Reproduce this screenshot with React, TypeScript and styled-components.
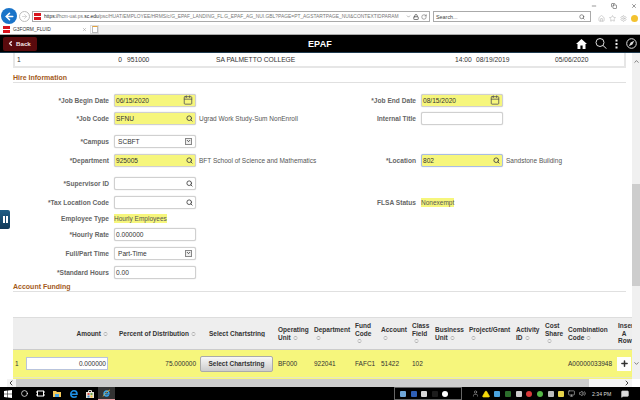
import React from "react";
import styled, { createGlobalStyle } from "styled-components";
import { Search, Star, Settings, RotateCw, Lock, X, Minus, Copy, ChevronLeft, ChevronRight, ChevronUp, ChevronDown, ArrowLeft, ArrowRight, Plus, Calendar, Circle, MessageSquare, Volume2, Monitor, Home, AlertTriangle, User } from "lucide-react";

const Global = createGlobalStyle`
  html, body { margin: 0; padding: 0; width: 640px; height: 400px; overflow: hidden; background: #fff; }
  * { box-sizing: border-box; }
  body { font-family: "Liberation Sans", Arial, sans-serif; color: #333; }
`;

const Page = styled.div`
  width: 640px; height: 400px; display: flex; flex-direction: column; position: relative; overflow: hidden;
`;

// --- browser chrome ---
const AddressRow = styled.div`
  height: 25px; flex: none; padding: 0 3px 1px 1px; display: flex; align-items: flex-end; background: #fff; position: relative;
`;
const BackCircle = styled.div`
  width: 16px; height: 16px; border-radius: 50%; background: #1a74c9; color: #fff; display: flex; align-items: center; justify-content: center; flex: none;
`;
const ForwardCircle = styled.div`
  width: 11px; height: 11px; border-radius: 50%; border: 1px solid #bbb; color: #bbb; display: flex; align-items: center; justify-content: center; flex: none; margin: 0 2px 2px 2px;
`;
const UrlBox = styled.div`
  width: 398px; height: 11px; border: 1px solid #aaa; display: flex; align-items: center; margin-bottom: 2px; padding: 0 2px 0 1px; flex: none; background: #fff;
`;
const Favicon = styled.span`
  width: 7px; height: 7px; background: #d9141e; flex: none; display: flex; align-items: center;
  &::after { content: ""; display: block; width: 100%; height: 1px; background: #fff; }
`;
const UrlText = styled.div`
  flex: 1; min-width: 0; margin-left: 3px; font-size: 4.9px; line-height: 9px; white-space: nowrap; overflow: hidden; color: #777;
  b { color: #222; font-weight: 400; }
`;
const UrlTools = styled.div`
  display: flex; align-items: center; gap: 2px; color: #555; flex: none; margin-left: 2px;
`;
const SearchBox = styled.div`
  width: 158px; height: 11px; border: 1px solid #aaa; margin: 0 0 2px 3px; display: flex; align-items: center; justify-content: space-between; padding: 0 5px 0 2px; font-size: 5.4px; color: #444; flex: none;
`;
const ChromeTools = styled.div`
  display: flex; gap: 4px; color: #b5b5b5; margin: 0 0 2px 7px; align-items: center;
`;
const Smiley = styled.span`
  width: 7px; height: 7px; border-radius: 50%; background: #f3c22f; display: block;
`;
const WindowControls = styled.div`
  position: absolute; top: 3px; right: 3px; display: flex; gap: 14px; color: #333;
`;
const TabRow = styled.div`
  height: 10px; flex: none; display: flex; background: #f2f2f2; border-bottom: 1px solid #aaa;
`;
const Tab = styled.div`
  width: 90px; background: #fff; display: flex; align-items: center; padding: 0 3px; font-size: 4.9px; color: #333; gap: 3px;
  span:nth-child(2) { flex: 1; }
`;
const NewTab = styled.div`
  width: 9px; background: #fff; border: 1px solid #ddd; display: flex; align-items: center; justify-content: center;
  &::after { content: ""; width: 4px; height: 5px; border: 1px solid #bbb; border-top-color: #e8a33a; }
`;

// --- app header ---
const Banner = styled.header`
  height: 18px; flex: none; background: #000; border-bottom: 1px solid #1e3a4f; display: grid; grid-template-columns: 1fr auto 1fr; align-items: center; padding: 0 3px; color: #fff;
`;
const BackButton = styled.button`
  width: 34px; height: 14px; border: none; border-radius: 2px; background: #5a0a0d; color: #f0e2e2; font: bold 6.2px "Liberation Sans", Arial, sans-serif; display: flex; align-items: center; padding: 0 0 0 4px; gap: 2px;
`;
const BannerTitle = styled.div`
  font-size: 9px; font-weight: bold; letter-spacing: 0.2px;
`;
const BannerIcons = styled.div`
  display: flex; justify-content: flex-end; align-items: center; gap: 8px;
`;

// --- main ---
const Body = styled.div`
  flex: 1; min-height: 0; display: flex; position: relative;
`;
const Content = styled.main`
  flex: 1; min-width: 0; overflow: hidden; padding-left: 13px; font-size: 6.6px; line-height: 9px;
`;
const VScroll = styled.div`
  width: 8px; flex: none; background: #f0f0f0; display: flex; flex-direction: column; align-items: center; color: #555; padding-top: 5px;
`;
const VThumb = styled.div`
  width: 8px; height: 102px; background: #cdcdcd; margin-top: 119px; margin-bottom: 74px;
`;
const SideTab = styled.div`
  position: absolute; left: 0; top: 157px; width: 10px; height: 19px; background: linear-gradient(#1f5e86, #123a58); border-radius: 0 2px 2px 0; display: flex; align-items: center; justify-content: center; gap: 1px;
  i { display: block; width: 2px; height: 7px; background: #fff; }
`;

const SummaryBox = styled.div`
  width: 613px; height: 15px; border: 2px solid #e6e6e6; border-top: none; display: grid; grid-template-columns: 20px 85px 5px 89px 239px 21px 79px 1fr; align-items: center; color: #333; white-space: nowrap; padding-left: 2px; font-size: 6.7px;
`;
const RightCell = styled.span`
  text-align: right;
`;
const SectionTitle = styled.h2<{ $top: number }>`
  margin: ${(p) => p.$top}px 0 0; width: 613px; height: 9px; font-size: 7px; line-height: 9px; font-weight: bold; color: #a35a1a;
`;
const SectionRule = styled.div`
  width: 613px; height: 1px; background: #e0e0e0;
`;
const Row = styled.div<{ $mt: number }>`
  display: grid; grid-template-columns: 294px 1fr; height: 14px; margin-top: ${(p) => p.$mt}px;
`;
const Field = styled.div`
  display: flex; align-items: center; min-width: 0;
`;
const Label = styled.label<{ $wide?: boolean }>`
  width: ${(p) => (p.$wide ? 109 : 96)}px; flex: none; text-align: right; margin-right: 5px; font-weight: bold; color: #666; white-space: nowrap; font-size: 6.6px;
`;
const Input = styled.div<{ $yellow?: boolean; $focus?: boolean }>`
  width: 82px; height: 13px; flex: none; border: 1px solid ${(p) => (p.$focus ? "#a9bde6" : "#d0d0d0")}; border-radius: 2px; background: ${(p) => (p.$yellow ? "#f6f67c" : "#fff")};
  display: flex; align-items: center; justify-content: space-between; padding: 0 2px 0 1px; color: #333; box-shadow: 0 0 1px #bbb;
  white-space: nowrap;
`;
const Value = styled.span<{ $inset?: boolean }>`
  margin-left: ${(p) => (p.$inset ? 2 : 0)}px; color: #333;
`;
const DropMark = styled.span`
  width: 7px; height: 7px; border: 1px solid #888; background: #eee; display: flex; align-items: center; justify-content: center; margin-right: 1px; color: #333;
`;
const Note = styled.span`
  margin-left: 3px; white-space: nowrap; color: #555; font-size: 6.5px;
`;
const Highlight = styled.span`
  background: #f6f67c; color: #555; white-space: nowrap; font-size: 6.5px;
`;

// --- funding table ---
const columns = "13px 84px 88px 78px 36px 41px 26px 31px 23px 34px 47px 29px 23px 50px 16px";
const Grid = styled.div`
  width: 619px; overflow: hidden; margin-top: 25px; border-top: 1px solid #ddd;
`;
const HeadRow = styled.div`
  display: grid; grid-template-columns: ${columns}; height: 32px; background: #eee; border-bottom: 1px solid #ccc; align-items: center;
`;
const HeadCell = styled.div<{ $align?: string }>`
  font-size: 6.5px; line-height: 7.5px; font-weight: bold; color: #333; text-align: ${(p) => p.$align || "left"}; padding: 0 2px; white-space: nowrap; overflow: hidden;
`;
const Sort = styled.svg`
  width: 5px; height: 6px; margin-left: 2px; vertical-align: -1px; display: inline-block;
`;
const DataRow = styled.div`
  display: grid; grid-template-columns: ${columns}; height: 28px; background: #f6f67c; border-bottom: 1px solid #e8e8c0; align-items: center; color: #333;
`;
const RowEnd = styled.div`
  height: 2px; background: #f6f67c; width: 100%;
`;
const DataCell = styled.div<{ $align?: string }>`
  padding: 0 2px; text-align: ${(p) => p.$align || "left"}; white-space: nowrap; font-size: 6.5px;
`;
const AmountCell = styled(DataCell)`
  padding-left: 0;
`;
const AmountInput = styled.div`
  width: 82px; height: 13px; border: 1px solid #b9c4dc; background: #fff; text-align: right; padding-right: 1px; line-height: 11px;
`;
const ChartButton = styled.button`
  width: 73px; height: 16px; border: 1px solid #aaa; border-radius: 2px; background: linear-gradient(#f8f8f8, #ccc); font: bold 6.5px "Liberation Sans", Arial, sans-serif; color: #333; padding: 0;
`;
const PlusButton = styled.div`
  width: 14px; height: 14px; background: #fff; display: flex; align-items: center; justify-content: center; color: #333; margin-left: 1px;
`;

const HScroll = styled.div`
  height: 8px; flex: none; display: grid; grid-template-columns: 7px 9px 573px 34px 9px 8px; align-items: center; background: #f4f4f4; color: #444;
`;
const HThumb = styled.div`
  height: 8px; background: #cdcdcd;
`;
const Blank = styled.div`
  height: 8px; background: #fff;
`;

// --- taskbar ---
const Taskbar = styled.footer`
  height: 13px; flex: none; background: #000; display: flex; align-items: center; color: #fff;
`;
const TaskSlot = styled.div<{ $active?: boolean }>`
  width: 16.4px; height: 13px; display: flex; align-items: center; justify-content: center; flex: none;
  background: ${(p) => (p.$active ? "#333" : "transparent")};
  border-bottom: ${(p) => (p.$active ? "1px solid #e59aa0" : "none")};
`;
const Spacer = styled.div`
  flex: 1;
`;
const NoticeGap = styled.div`
  width: 11px; flex: none;
`;
const TrayBox = styled.div`
  width: 68px; height: 13px; border: 1px solid #666; display: flex; align-items: center; gap: 4.5px; padding: 0 0 0 5px; margin-right: 8px; flex: none;
`;
const Tray = styled.div`
  display: grid; grid-auto-flow: column; grid-auto-columns: 10.7px; align-items: center; justify-items: center; flex: none;
`;
const TrayDot = styled.span<{ $c: string; $round?: boolean }>`
  width: 6px; height: 6px; background: ${(p) => p.$c}; display: block; border-radius: ${(p) => (p.$round ? "50%" : "1px")}; flex: none;
`;
const Clock = styled.div`
  font-size: 5.2px; color: #ddd; margin: 0 9px 0 4px; white-space: nowrap; width: 20px;
`;

const SortIcon = () => (
  <Sort viewBox="0 0 10 12">
    <path d="M2 5l3-3 3 3M2 7l3 3 3-3" fill="none" stroke="#888" strokeWidth="1.5" />
  </Sort>
);

const Lens = () => <Search size={7} strokeWidth={3} color="#444" />;
const Cal = () => <Calendar size={10} strokeWidth={2} color="#555" />;
const Drop = () => (
  <DropMark>
    <ChevronDown size={6} strokeWidth={4} />
  </DropMark>
);

const WinLogo = () => (
  <svg width="8" height="8" viewBox="0 0 8 8">
    <path d="M0 1l3.5-.5V3.8H0zM4 .4L8 0v3.8H4zM0 4.2h3.5v3.3L0 7zM4 4.2h4V8l-4-.5z" fill="#fff" />
  </svg>
);
const TaskView = () => (
  <svg width="9" height="7" viewBox="0 0 9 7" fill="none" stroke="#fff" strokeWidth="1">
    <rect x="1.5" y="1" width="6" height="5" />
    <path d="M0 2h1M8 2h1M0 5h1M8 5h1" />
  </svg>
);
const FolderIcon = () => (
  <svg width="8" height="8" viewBox="0 0 8 8">
    <path d="M0 1h3l1 1h4v5H0z" fill="#f4c95a" />
    <rect x="2" y="4" width="4" height="3" fill="#4aa6e6" />
  </svg>
);
const EdgeIcon = () => (
  <svg width="8" height="8" viewBox="0 0 8 8" fill="none" stroke="#1e8fe6" strokeWidth="1.6">
    <path d="M1 4.2h6C7 2 5.6.8 4 .8 2.2.8.8 2.2.8 4S2.2 7.2 4 7.2c1 0 2-.3 2.8-.9" />
  </svg>
);
const StoreIcon = () => (
  <svg width="8" height="8" viewBox="0 0 8 8">
    <path d="M0 2h8v6H0z" fill="#e8e4da" />
    <path d="M2.5 2V.6h3V2" fill="none" stroke="#e8e4da" />
    <rect x="1.5" y="3" width="2" height="2" fill="#d9534f" />
    <rect x="4.5" y="3" width="2" height="2" fill="#6aa84f" />
    <rect x="1.5" y="5.5" width="2" height="2" fill="#3d85c6" />
    <rect x="4.5" y="5.5" width="2" height="2" fill="#f1c232" />
  </svg>
);
const IeIcon = () => (
  <svg width="9" height="9" viewBox="0 0 9 9" fill="none">
    <path d="M2 4.8h5C7 3 5.9 2 4.5 2S2 3 2 4.5 3 7 4.5 7c.9 0 1.7-.4 2.2-1" stroke="#39a6ee" strokeWidth="1.3" />
    <path d="M1 7.5C2.5 4.5 5 2 8 1" stroke="#f0c040" strokeWidth=".7" />
  </svg>
);
const HomeSolid = () => (
  <svg width="11" height="10" viewBox="0 0 11 10">
    <path d="M5.5 0L11 5H9.5v5H6.6V6.6H4.4V10H1.5V5H0z" fill="#fff" />
  </svg>
);
const MagnifierThin = () => (
  <svg width="12" height="11" viewBox="0 0 12 11" fill="none" stroke="#ddd" strokeWidth="1">
    <circle cx="5" cy="4.5" r="4" />
    <path d="M8 7.5l3.5 3.2" />
  </svg>
);
const Dots = () => (
  <svg width="3" height="10" viewBox="0 0 3 10" fill="#eee">
    <rect x=".5" y=".5" width="2" height="2" />
    <rect x=".5" y="4" width="2" height="2" />
    <rect x=".5" y="7.5" width="2" height="2" />
  </svg>
);
const CompassRound = () => (
  <svg width="11" height="11" viewBox="0 0 11 11">
    <circle cx="5.5" cy="5.5" r="4.8" fill="none" stroke="#ddd" strokeWidth="1" />
    <path d="M8.2 2.8L6.4 6.4 2.8 8.2 4.6 4.6z" fill="#ddd" />
  </svg>
);

const heads: [string, boolean][] = [
  ["Operating\nUnit", true],
  ["Department", false],
  ["Fund\nCode", false],
  ["Account", false],
  ["Class\nField", false],
  ["Business\nUnit", true],
  ["Project/Grant", false],
  ["Activity\nID", true],
  ["Cost\nShare", false],
  ["Combination\nCode", true],
];

const Multi: React.FC<{ text: string; inline: boolean }> = ({ text, inline }) => {
  const lines = text.split("\n");
  return (
    <>
      {lines.map((l, i) => (
        <div key={l}>
          {l}
          {inline && i === lines.length - 1 && <SortIcon />}
        </div>
      ))}
      {!inline && (
        <div>
          <SortIcon />
        </div>
      )}
    </>
  );
};

export default function App() {
  return (
    <Page>
      <Global />
      <AddressRow>
        <BackCircle>
          <ArrowLeft size={11} strokeWidth={3.5} />
        </BackCircle>
        <ForwardCircle>
          <ArrowRight size={7} strokeWidth={2} />
        </ForwardCircle>
        <UrlBox>
          <Favicon />
          <UrlText>
            <b>https://</b>hcm-uat.ps.<b>sc.edu</b>/psc/HUAT/EMPLOYEE/HRMS/c/G_EPAF_LANDING_FL.G_EPAF_AG_NUI.GBL?PAGE=PT_AGSTARTPAGE_NUI&amp;CONTEXTIDPARAM
          </UrlText>
          <UrlTools>
            <ChevronDown size={5} />
            <Lock size={6} strokeWidth={3} />
            <RotateCw size={6} />
          </UrlTools>
        </UrlBox>
        <SearchBox>
          <span>Search...</span>
          <Search size={6} color="#333" />
        </SearchBox>
        <ChromeTools>
          <Home size={7} />
          <Star size={7} />
          <Settings size={7} />
          <Smiley />
        </ChromeTools>
        <WindowControls>
          <Minus size={6} />
          <Copy size={6} />
          <X size={6} />
        </WindowControls>
      </AddressRow>
      <TabRow>
        <Tab>
          <Favicon />
          <span>G3FORM_FLUID</span>
          <X size={5} color="#888" />
        </Tab>
        <NewTab />
      </TabRow>
      <Banner>
        <BackButton>
          <ChevronLeft size={7} strokeWidth={5} />
          Back
        </BackButton>
        <BannerTitle>EPAF</BannerTitle>
        <BannerIcons>
          <HomeSolid />
          <MagnifierThin />
          <Dots />
          <CompassRound />
        </BannerIcons>
      </Banner>
      <Body>
        <Content>
          <SummaryBox>
            <span>1</span>
            <RightCell>0</RightCell>
            <span />
            <span>951000</span>
            <span>SA PALMETTO COLLEGE</span>
            <span>14:00</span>
            <span>08/19/2019</span>
            <span>05/06/2020</span>
          </SummaryBox>
          <SectionTitle $top={5}>Hire Information</SectionTitle>
          <SectionRule />
          <Row $mt={10}>
            <Field>
              <Label>*Job Begin Date</Label>
              <Input $yellow>
                <Value>06/15/2020</Value>
                <Cal />
              </Input>
            </Field>
            <Field>
              <Label $wide>*Job End Date</Label>
              <Input $yellow>
                <Value>08/15/2020</Value>
                <Cal />
              </Input>
            </Field>
          </Row>
          <Row $mt={4}>
            <Field>
              <Label>*Job Code</Label>
              <Input $yellow>
                <Value>SFNU</Value>
                <Lens />
              </Input>
              <Note>Ugrad Work Study-Sum NonEnroll</Note>
            </Field>
            <Field>
              <Label $wide>Internal Title</Label>
              <Input />
            </Field>
          </Row>
          <Row $mt={9}>
            <Field>
              <Label>*Campus</Label>
              <Input>
                <Value $inset>SCBFT</Value>
                <Drop />
              </Input>
            </Field>
          </Row>
          <Row $mt={5}>
            <Field>
              <Label>*Department</Label>
              <Input $yellow>
                <Value>925005</Value>
                <Lens />
              </Input>
              <Note>BFT School of Science and Mathematics</Note>
            </Field>
            <Field>
              <Label $wide>*Location</Label>
              <Input $yellow $focus>
                <Value>802</Value>
                <Lens />
              </Input>
              <Note>Sandstone Building</Note>
            </Field>
          </Row>
          <Row $mt={9}>
            <Field>
              <Label>*Supervisor ID</Label>
              <Input>
                <span />
                <Lens />
              </Input>
            </Field>
          </Row>
          <Row $mt={5}>
            <Field>
              <Label>*Tax Location Code</Label>
              <Input>
                <span />
                <Lens />
              </Input>
            </Field>
            <Field>
              <Label $wide>FLSA Status</Label>
              <Highlight>Nonexempt</Highlight>
            </Field>
          </Row>
          <Row $mt={2}>
            <Field>
              <Label>Employee Type</Label>
              <Highlight>Hourly Employees</Highlight>
            </Field>
          </Row>
          <Row $mt={2}>
            <Field>
              <Label>*Hourly Rate</Label>
              <Input>
                <Value>0.000000</Value>
              </Input>
            </Field>
          </Row>
          <Row $mt={5}>
            <Field>
              <Label>Full/Part Time</Label>
              <Input>
                <Value $inset>Part-Time</Value>
                <Drop />
              </Input>
            </Field>
          </Row>
          <Row $mt={5}>
            <Field>
              <Label>*Standard Hours</Label>
              <Input>
                <Value>0.00</Value>
              </Input>
            </Field>
          </Row>
          <SectionTitle $top={3}>Account Funding</SectionTitle>
          <SectionRule />
          <Grid>
            <HeadRow>
              <HeadCell />
              <HeadCell $align="right">
                Amount
                <SortIcon />
              </HeadCell>
              <HeadCell $align="right">
                Percent of Distribution
                <SortIcon />
              </HeadCell>
              <HeadCell $align="center">Select Chartstring</HeadCell>
              {heads.map(([text, inline]) => (
                <HeadCell key={text}>
                  <Multi text={text} inline={inline} />
                </HeadCell>
              ))}
              <HeadCell $align="center">
                Insert
                <br />A
                <br />
                Row
              </HeadCell>
            </HeadRow>
            <DataRow>
              <DataCell>1</DataCell>
              <AmountCell>
                <AmountInput>0.000000</AmountInput>
              </AmountCell>
              <DataCell $align="right">75.000000</DataCell>
              <DataCell>
                <ChartButton>Select Chartstring</ChartButton>
              </DataCell>
              <DataCell>BF000</DataCell>
              <DataCell>922041</DataCell>
              <DataCell>FAFC1</DataCell>
              <DataCell>51422</DataCell>
              <DataCell>102</DataCell>
              <DataCell />
              <DataCell />
              <DataCell />
              <DataCell />
              <DataCell>A00000033948</DataCell>
              <PlusButton>
                <Plus size={9} strokeWidth={4} />
              </PlusButton>
            </DataRow>
            <RowEnd />
          </Grid>
        </Content>
        <VScroll>
          <ChevronUp size={7} strokeWidth={2.5} />
          <VThumb />
          <ChevronDown size={7} strokeWidth={2.5} />
        </VScroll>
        <SideTab>
          <i />
          <i />
        </SideTab>
      </Body>
      <HScroll>
        <Blank />
        <ChevronLeft size={8} strokeWidth={3} />
        <HThumb />
        <span />
        <ChevronRight size={8} strokeWidth={3} />
        <Blank />
      </HScroll>
      <Taskbar>
        <TaskSlot>
          <WinLogo />
        </TaskSlot>
        <TaskSlot>
          <Circle size={7} strokeWidth={2.5} />
        </TaskSlot>
        <TaskSlot>
          <TaskView />
        </TaskSlot>
        <TaskSlot>
          <FolderIcon />
        </TaskSlot>
        <TaskSlot>
          <EdgeIcon />
        </TaskSlot>
        <TaskSlot>
          <StoreIcon />
        </TaskSlot>
        <TaskSlot $active>
          <IeIcon />
        </TaskSlot>
        <Spacer />
        <TrayBox>
          <TrayDot $c="#6fa6d8" />
          <TrayDot $c="#2f5fb5" />
          <TrayDot $c="#d8d8d8" />
          <TrayDot $c="#1c1c1c" />
          <TrayDot $c="#fff" $round />
        </TrayBox>
        <Tray>
          <User size={7} color="#aaa" />
          <AlertTriangle size={8} color="#f5d90a" fill="#f5d90a" />
          <TrayDot $c="#4aa3df" />
          <TrayDot $c="#2c6e2c" />
          <TrayDot $c="#ccc" />
          <TrayDot $c="#d93a3a" $round />
          <TrayDot $c="#55b747" $round />
          <TrayDot $c="#bbb" />
          <TrayDot $c="#e6d34a" />
          <Monitor size={7} color="#ccc" />
          <Volume2 size={7} color="#ccc" />
        </Tray>
        <Clock>2:34 PM</Clock>
        <MessageSquare size={8} color="#ddd" fill="#ddd" />
        <NoticeGap />
      </Taskbar>
    </Page>
  );
}
